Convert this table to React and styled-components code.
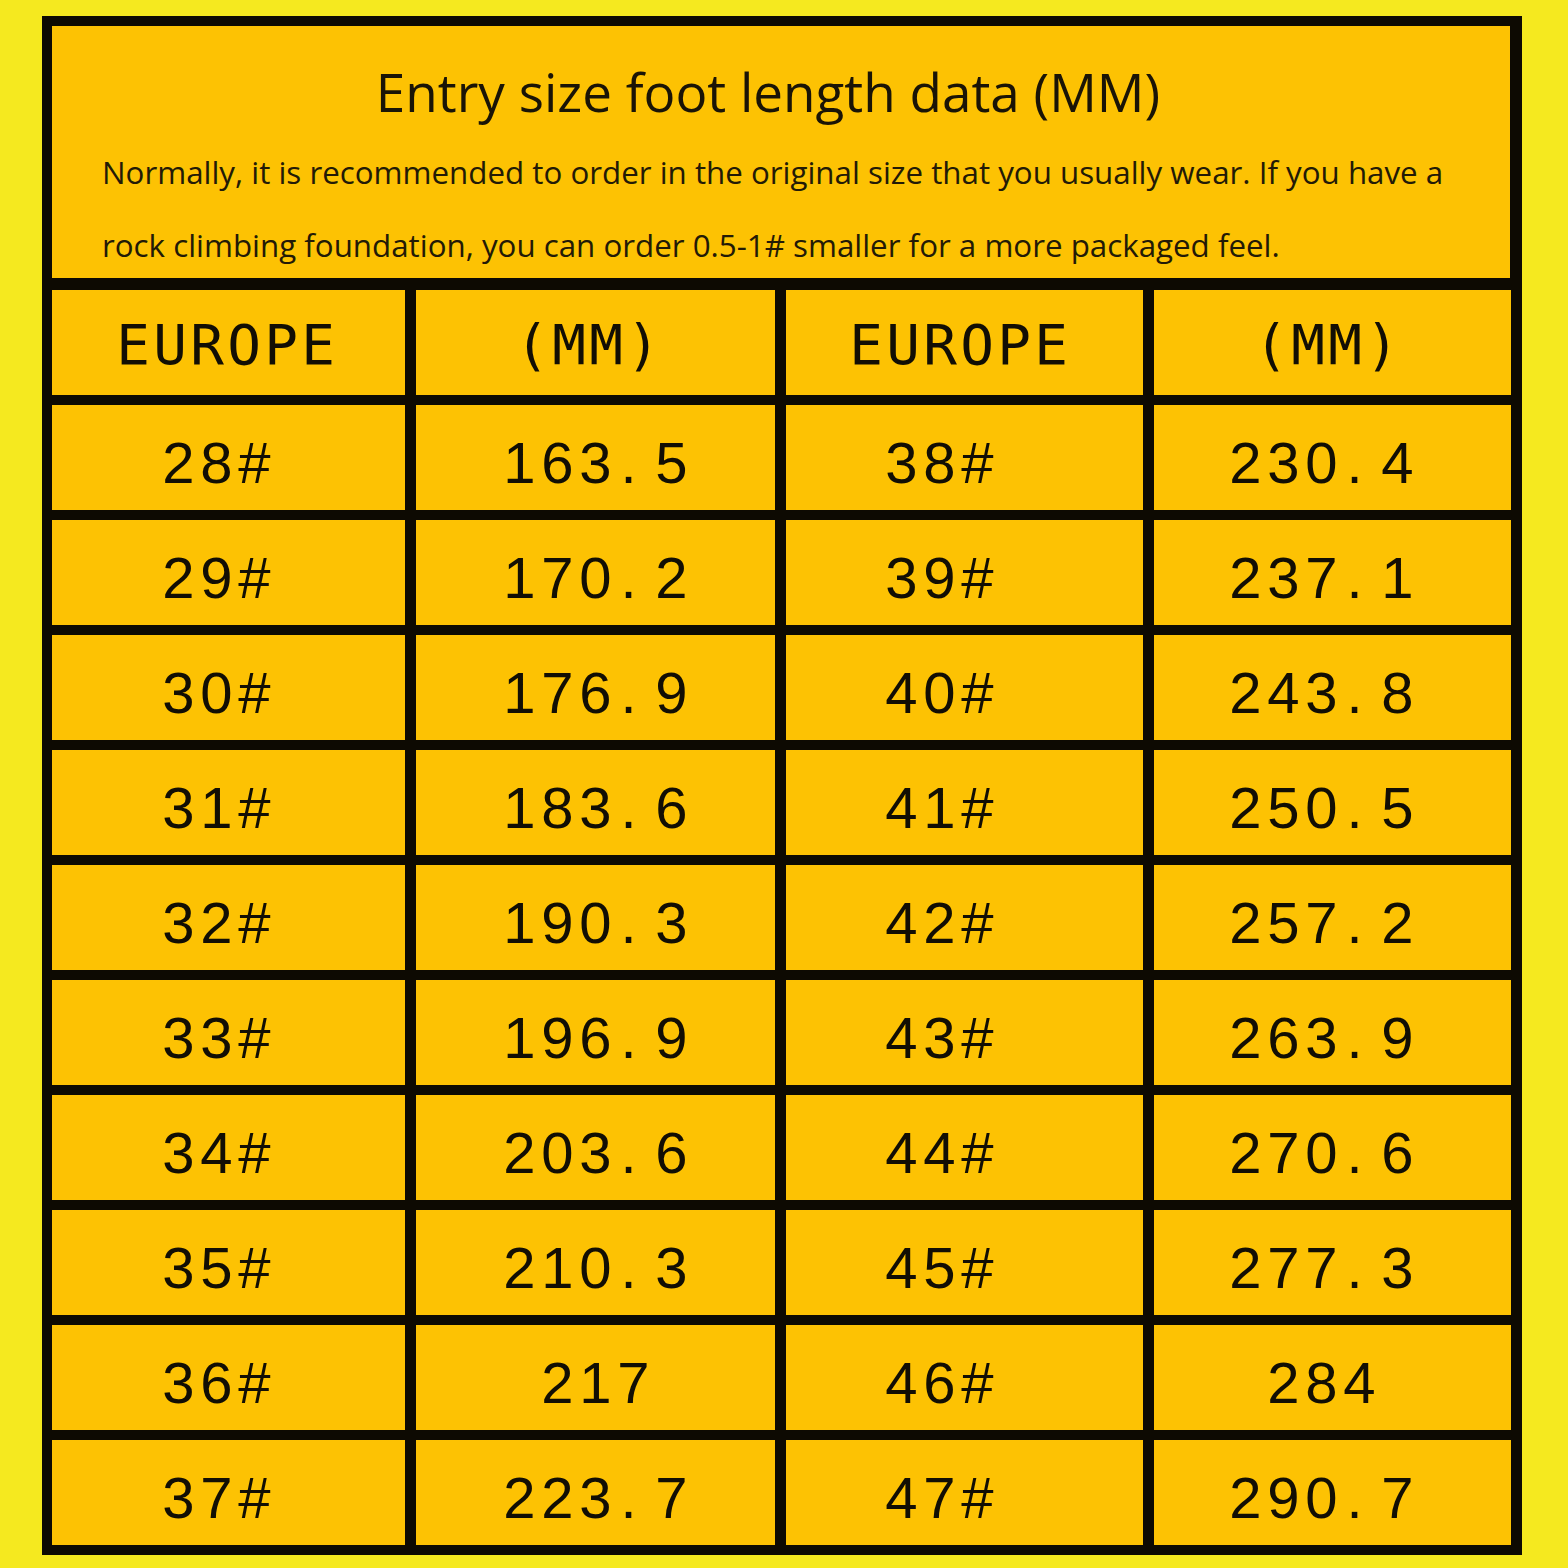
import React from "react";
import styled, { createGlobalStyle } from "styled-components";

const Global = createGlobalStyle`
  html, body { margin: 0; padding: 0; background: #f5e91f; }
  body { width: 1568px; height: 1568px; overflow: hidden; }
`;

const Page = styled.div`
  width: 1568px;
  height: 1568px;
  box-sizing: border-box;
  padding: 16px 46px 13px 42px;
  background: #f5e91f;
`;

const Frame = styled.div`
  box-sizing: border-box;
  height: 100%;
  background: #0d0a02;
  padding: 10px 12px 10px 10px;
  display: flex;
  flex-direction: column;
  gap: 12px;
`;

const Header = styled.div`
  background: #fdc203;
  height: 252px;
  flex: none;
  box-sizing: border-box;
  padding: 36px 30px 0 50px;
  display: flex;
  flex-direction: column;
`;

const Title = styled.h1`
  margin: 0;
  text-align: center;
  font-family: "Open Sans", "Noto Sans", sans-serif;
  font-weight: 400;
  font-size: 53px;
  line-height: 60px;
  color: #1a1406;
  padding-right: 46px;
`;

const Note = styled.p`
  margin: 14px 0 0;
  font-family: "Open Sans", "Noto Sans", sans-serif;
  font-size: 31.3px;
  line-height: 73px;
  color: #231a06;
`;

const Table = styled.div`
  flex: 1;
  display: grid;
  grid-template-columns: 353px 359px 357px 357px;
  grid-auto-rows: 1fr;
  column-gap: 11px;
  row-gap: 10px;
`;

const Cell = styled.div`
  background: #fdc203;
  display: flex;
  align-items: center;
  justify-content: center;
  padding-right: ${(p) => p.$shift || 0}px;
  padding-top: ${(p) => (p.$head ? 4 : 10)}px;
  font-family: ${(p) =>
    p.$head
      ? `"DejaVu Sans Mono", "Liberation Mono", monospace`
      : `"Liberation Sans", Arial, sans-serif`};
  font-size: ${(p) => (p.$head ? 56 : 58)}px;
  line-height: 1;
  color: #120e04;
  white-space: pre;
`;

const Glyph = styled.span`
  display: inline-block;
  box-sizing: border-box;
  width: ${(p) => p.$w}px;
  text-align: ${(p) => (p.$dot ? "left" : "center")};
  padding-left: ${(p) => (p.$dot ? 6 : 0)}px;
`;

const rows = [
  ["28#", "163.5", "38#", "230.4"],
  ["29#", "170.2", "39#", "237.1"],
  ["30#", "176.9", "40#", "243.8"],
  ["31#", "183.6", "41#", "250.5"],
  ["32#", "190.3", "42#", "257.2"],
  ["33#", "196.9", "43#", "263.9"],
  ["34#", "203.6", "44#", "270.6"],
  ["35#", "210.3", "45#", "277.3"],
  ["36#", "217", "46#", "284"],
  ["37#", "223.7", "47#", "290.7"],
];

const headShift = [6, 16, 12, 12];
const bodyShift = [24, 0, 50, 22];

function Spaced({ text, w }) {
  return text.split("").map((c, i) => (
    <Glyph key={i} $w={w} $dot={c === "."}>
      {c}
    </Glyph>
  ));
}

export default function App() {
  return (
    <>
      <Global />
      <Page>
        <Frame>
          <Header>
            <Title>Entry size foot length data (MM)</Title>
            <Note>
              Normally, it is recommended to order in the original size that you usually wear. If you have a
              rock climbing foundation, you can order 0.5-1# smaller for a more packaged feel.
            </Note>
          </Header>
          <Table>
            {["EUROPE", "(MM)", "EUROPE", "(MM)"].map((t, i) => (
              <Cell key={"h" + i} $head $shift={headShift[i]}>
                <Spaced text={t} w={37} />
              </Cell>
            ))}
            {rows.map((r, ri) =>
              r.map((t, ci) => (
                <Cell key={ri + "-" + ci} $shift={bodyShift[ci]}>
                  <Spaced text={t} w={38} />
                </Cell>
              ))
            )}
          </Table>
        </Frame>
      </Page>
    </>
  );
}
